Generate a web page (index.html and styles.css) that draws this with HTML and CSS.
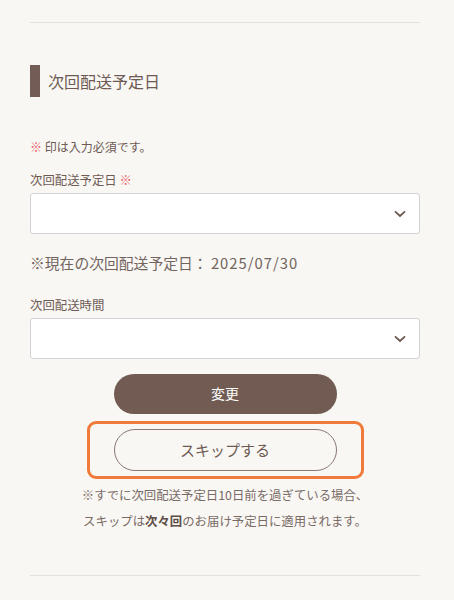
FILE: index.html
```html
<!DOCTYPE html>
<html lang="ja">
<head>
<meta charset="utf-8">
<link rel="stylesheet" href="styles.css">
</head>
<body>
<div class="page">
  <div class="rule top"></div>
  <h2 class="heading"><span class="bar"></span><span>次回配送予定日</span></h2>
  <p class="required"><span class="req">※</span> 印は入力必須です。</p>
  <div class="label label-date">次回配送予定日 <span class="req">※</span></div>
  <div class="select">
    <svg width="12" height="8" viewBox="0 0 12 8"><path d="M1.5 1.8 L6 6 L10.5 1.8" fill="none" stroke="#6e5a53" stroke-width="1.8" stroke-linecap="round" stroke-linejoin="round"/></svg>
  </div>
  <p class="current">※現在の次回配送予定日： <span class="date">2025/07/30</span></p>
  <div class="label label-time">次回配送時間</div>
  <div class="select">
    <svg width="12" height="8" viewBox="0 0 12 8"><path d="M1.5 1.8 L6 6 L10.5 1.8" fill="none" stroke="#6e5a53" stroke-width="1.8" stroke-linecap="round" stroke-linejoin="round"/></svg>
  </div>
  <div class="actions">
    <button class="btn btn-primary">変更</button>
    <div class="highlight">
      <button class="btn btn-outline">スキップする</button>
    </div>
    <p class="note">※すでに次回配送予定日10日前を過ぎている場合、<br>スキップは<strong>次々回</strong>のお届け予定日に適用されます。</p>
  </div>
  <div class="rule bottom"></div>
</div>
</body>
</html>
```

FILE: styles.css
```css
* { box-sizing: border-box; }
html, body { margin: 0; padding: 0; }
body {
  background: #f8f7f3;
  font-family: "Noto Sans CJK JP", "Noto Sans", sans-serif;
  color: #6e5a53;
  width: 454px;
  height: 600px;
  overflow: hidden;
}
.page {
  width: 390px;
  margin-left: 30px;
  display: flex;
  flex-direction: column;
}
.rule { height: 1px; background: #dfe2e1; }
.rule.top { margin-top: 22px; }
.rule.bottom { margin-top: 41px; }
.heading {
  margin: 42px 0 0;
  height: 32px;
  display: flex;
  align-items: center;
  gap: 8px;
  font-size: 16px;
  font-weight: 400;
  line-height: 32px;
  color: #6e5a53;
}
.bar { width: 10px; height: 32px; background: #735c55; }
.required {
  margin: 40px 0 0;
  font-size: 12px;
  line-height: 20px;
}
.req { color: #e8555a; }
.label {
  font-size: 12.4px;
  line-height: 20px;
}
.label-date { margin-top: 13px; }
.label-time { margin-top: 21px; }
.select {
  margin-top: 3px;
  height: 41px;
  background: #fff;
  border: 1px solid #d3d3d3;
  border-radius: 3px;
  display: flex;
  align-items: center;
  justify-content: flex-end;
  padding-right: 13px;
}
.current {
  margin: 18px 0 0;
  font-size: 14.8px;
  line-height: 22px;
  color: #736460;
}
.date { letter-spacing: 1px; }
.actions {
  display: flex;
  flex-direction: column;
  align-items: center;
}
.btn {
  font-family: inherit;
  width: 223px;
  border-radius: 21px;
  cursor: pointer;
}
.btn-primary {
  margin-top: 15px;
  height: 40px;
  background: #715b53;
  border: none;
  color: #fff;
  font-size: 14px;
  padding: 0 0 2px;
}
.highlight {
  margin-top: 7px;
  width: 277px;
  height: 58px;
  border: 3px solid #ef7a39;
  border-radius: 9px;
  display: flex;
  justify-content: center;
  align-items: center;
}
.btn-outline {
  height: 42px;
  background: transparent;
  border: 1px solid #8a7873;
  color: #6e5a53;
  font-size: 15px;
  padding: 0 0 2px;
}
.note {
  margin: 3px 0 0;
  font-size: 12.4px;
  line-height: 26px;
  text-align: center;
  color: #7a6b66;
}
.note strong { font-weight: 700; color: #5e4c46; }
```
